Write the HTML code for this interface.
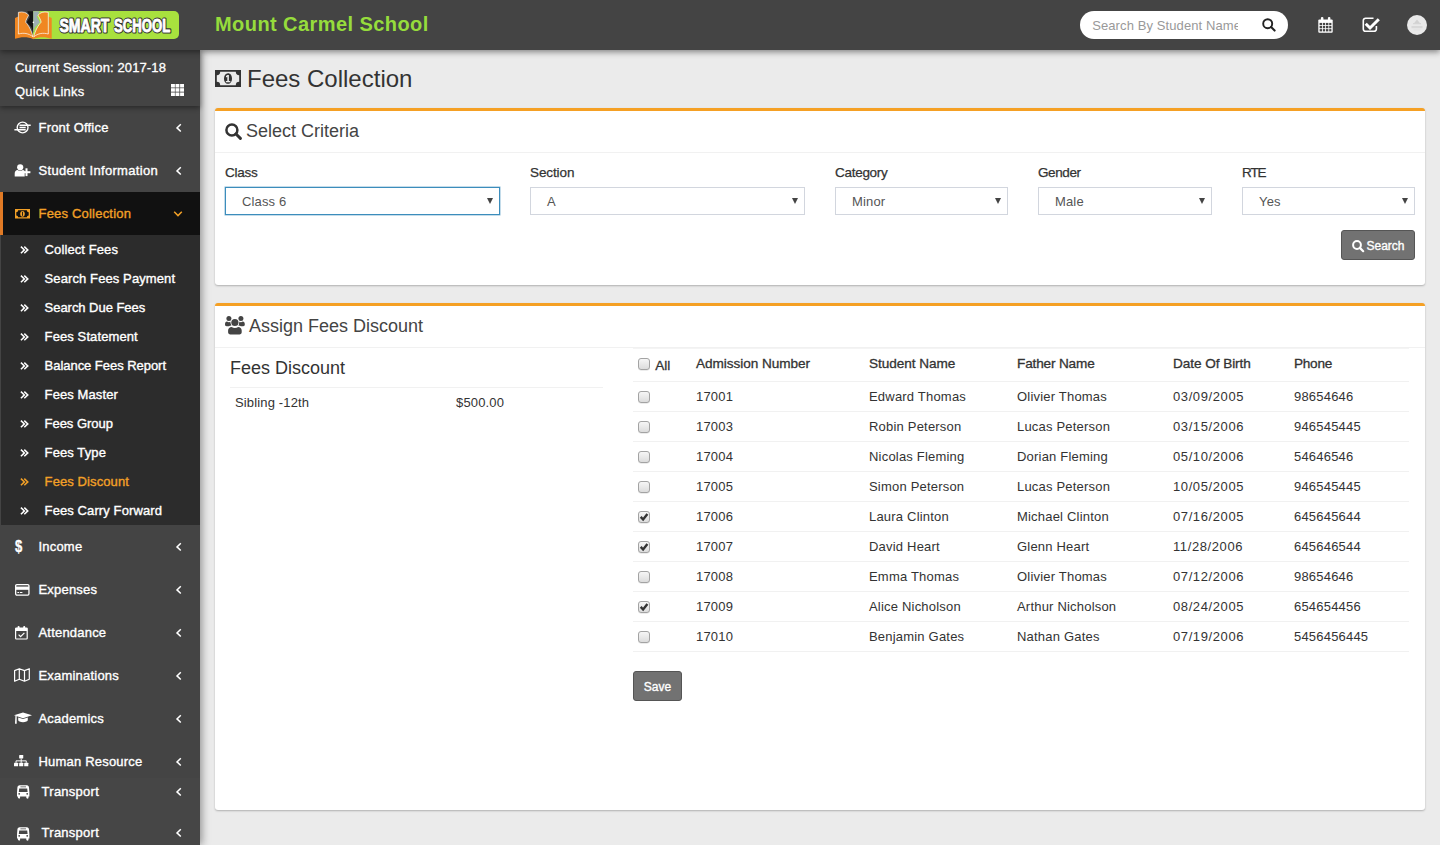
<!DOCTYPE html>
<html lang="en">
<head>
<meta charset="utf-8">
<title>Smart School - Fees Collection</title>
<style>
*{box-sizing:border-box;margin:0;padding:0}
html,body{width:1440px;height:845px;overflow:hidden}
body{font-family:"Liberation Sans",sans-serif;font-size:13px;color:#333;background:#ebebeb;position:relative}
svg{display:block}
a{color:inherit;text-decoration:none}
ul{list-style:none}

/* ---------- header ---------- */
.topbar{position:absolute;left:0;top:0;width:1440px;height:50px;background:#444;z-index:30;box-shadow:0 2px 6px rgba(0,0,0,.45)}
.logo{position:absolute;left:15px;top:11px;width:164px;height:29px}
.school{position:absolute;left:215px;top:11px;font-size:20px;line-height:26px;font-weight:bold;color:#96dc3c;letter-spacing:.43px;white-space:nowrap}
.search{position:absolute;left:1080px;top:11px;width:208px;height:28px;border-radius:14px;background:#fff}
.search span{position:absolute;left:12.2px;top:7px;width:146px;overflow:hidden;white-space:nowrap;font-size:13px;line-height:16px;color:#999;letter-spacing:.1px}
.search svg{position:absolute;left:182px;top:7px}
.tb-ico{position:absolute;top:17px}
.avatar{position:absolute;left:1407px;top:14.6px;width:20.3px;height:20.3px;border-radius:50%;background:#e9e9e9;overflow:hidden}

/* ---------- sidebar ---------- */
.sidebar{position:absolute;left:0;top:50px;width:200px;height:795px;background:#444;z-index:20;box-shadow:2px 0 8px rgba(0,0,0,.38)}
.session{position:absolute;left:0;top:0;width:200px;height:56px;background:#444;box-shadow:0 2px 5px rgba(0,0,0,.4);color:#fff;font-size:13px;z-index:2}
.session div{position:absolute;left:15px;white-space:nowrap;line-height:16px;-webkit-text-stroke:.3px currentColor;letter-spacing:.12px}
.session svg{position:absolute;left:171px;top:34px}
.menu{position:absolute;left:0;top:56px;width:200px}
.menu>li{position:relative;height:43px;color:#fff}
.menu>li>a{display:block;height:43px;line-height:43px;padding-left:38.5px;font-size:13px;font-weight:normal;-webkit-text-stroke:.36px currentColor;letter-spacing:.2px;white-space:nowrap;position:relative}
.menu>li .mi{position:absolute}
.menu>li .ar{position:absolute;left:174.5px;top:16.8px}
.menu>li.active{background:#111;color:#f2a027;border-left:3px solid #e07a25}
.menu>li.active>a{padding-left:35.5px}
.menu>li.active .ar{left:170px;top:17.8px}
.sub{background:#2c2c2c;height:290px;margin-left:1px}
.sub li{height:29px;line-height:29px;font-size:13px;font-weight:normal;-webkit-text-stroke:.36px currentColor;letter-spacing:.1px;color:#fff;padding-left:43.6px;position:relative;white-space:nowrap}
.sub li svg{position:absolute;left:19.4px;top:10.9px}
.sub li.on{color:#f2a027}

/* ---------- content ---------- */
.content{position:absolute;left:200px;top:50px;width:1240px;height:795px}
h1.page{position:absolute;left:47px;top:14px;font-size:24px;line-height:30px;font-weight:normal;color:#333;white-space:nowrap}
.h1ico{position:absolute;left:15px;top:20px}
.box{position:absolute;left:15px;width:1210px;background:#fff;border-top:3px solid #f5a024;border-radius:3px;box-shadow:0 1px 2px rgba(0,0,0,.25)}
.box-h{height:42px;border-bottom:1px solid #f1f1f1;position:relative}
.box-h h3{position:absolute;left:31px;top:8px;font-size:18px;line-height:24px;font-weight:normal;color:#444;white-space:nowrap}
.box-h svg{position:absolute;left:10px;top:12px}
label{position:absolute;font-size:13.5px;font-weight:normal;-webkit-text-stroke:.25px currentColor;letter-spacing:-.28px;color:#333;line-height:16px}
.sel{position:absolute;top:76px;height:28px;border:1px solid #d2d6de;background:#fff;font-size:13px;color:#555;line-height:27px;padding-left:16px;letter-spacing:.15px}
.sel:after{content:"";position:absolute;right:6.5px;top:9.8px;border-left:3.5px solid transparent;border-right:3.5px solid transparent;border-top:6px solid #444}
.sel.focus{border-color:#3c8dbc;box-shadow:0 0 0 .5px rgba(60,141,188,.6)}
.btn{position:absolute;background:#727272;border:1px solid #555;border-radius:3px;color:#fff;font-size:12px;font-weight:normal;-webkit-text-stroke:.35px currentColor;text-align:center;white-space:nowrap}
table{border-collapse:separate;border-spacing:0}

.fd{position:absolute;left:15px;top:51px;font-size:18px;line-height:22px;font-weight:normal;color:#333;white-space:nowrap}
.fdline{position:absolute;left:15px;top:81px;width:373px;height:1px;background:#f1f1f1}
.fdrow{position:absolute;left:0;top:89px;letter-spacing:.15px;font-size:13px;line-height:16px}
.fdrow span{position:absolute;white-space:nowrap;top:0}
.stu{position:absolute;left:418px;top:42px;width:776px;table-layout:fixed;font-size:13px}
.stu th{height:34px;padding:0 0 2.4px 0 !important;text-align:left;font-weight:normal;-webkit-text-stroke:.3px currentColor;letter-spacing:-.06px;font-size:13.6px;color:#333;border-bottom:1px solid #f1f1f1;border-top:1px solid #f4f4f4;white-space:nowrap;position:relative}
.stu td{height:30px;border-bottom:1px solid #f1f1f1;padding:0;white-space:nowrap;color:#333;letter-spacing:.2px}
.stu td:nth-child(5){letter-spacing:.6px}
.stu th:nth-child(4){letter-spacing:-.16px}
.stu th:nth-child(6){letter-spacing:-.26px}
.stu th:nth-child(1){width:63px}
.stu th:nth-child(2){width:173px}
.stu th:nth-child(3){width:148px}
.stu th:nth-child(4){width:156px}
.stu th:nth-child(5){width:121px}
.cb{display:inline-block;width:12px;height:12px;border:1px solid #a3a3a3;border-radius:3px;background:linear-gradient(#f6f6f6,#dcdcdc);margin-left:5px;vertical-align:middle;position:relative;top:-1px;box-shadow:0 .5px .5px rgba(0,0,0,.15)}
.cb svg{position:absolute;left:0;top:0}
.all{position:absolute;left:22.2px;top:9.4px;font-size:13.6px;line-height:16px;letter-spacing:0}
th .cb{position:absolute;left:0;top:9px !important}

.tr-wrap{position:absolute;left:0;top:728px;width:200px;height:67px;background:#464646}
.tr{position:absolute;left:0;margin-top:1px;width:200px;height:41px;color:#fff;font-size:13px;-webkit-text-stroke:.36px currentColor;letter-spacing:.2px}
.tr span{position:absolute;left:41.6px;letter-spacing:.25px;top:5px;line-height:16px;white-space:nowrap}
.tr .ar{position:absolute;left:174.5px;top:8.2px}
.tr .mi{position:absolute}
</style>
</head>
<body>

<div class="topbar">
  <div class="logo">
    <svg width="164" height="29" viewBox="0 0 164 29">
      <path d="M18 0 H159 A5 5 0 0 1 164 5 V23 A5 5 0 0 1 159 28 H18 Z" fill="#a8e13e"/>
      <path d="M12.3 0.3 H18.3 V21.5 L16.6 16.5 L11.8 11.2 L14.8 6 Z" fill="#151515"/>
      <path d="M18.3 0.3 H24.6 L22 6 L24.9 11.2 L20 16.5 L18.3 21.5 Z" fill="#9fb0b3"/>
      <path d="M0 7 L3.3 5.4 V20 L18.3 24 V28.2 C13 25.6 6 25.6 0 27.8 Z" fill="#f08722"/>
      <path d="M36.7 7 L33.4 5.4 V20 L18.3 24 V28.2 C23.7 25.6 30.7 25.6 36.7 27.8 Z" fill="#f08722"/>
      <path d="M3.4 1.3 C8 0.3 12 1.6 13.6 4.2 C12.2 7 10.8 9 10.6 11.2 C13.2 14 16.4 19 17.9 25.8 C13.6 22.2 8.6 21.6 3.4 23 Z" fill="#f08722" stroke="#fff" stroke-width=".7"/>
      <path d="M33.3 1.3 C28.7 0.3 24.7 1.6 23.1 4.2 C24.5 7 25.9 9 26.1 11.2 C23.5 14 20.3 19 18.8 25.8 C23.1 22.2 28.1 21.6 33.3 23 Z" fill="#f08722" stroke="#fff" stroke-width=".7"/>
      <circle cx="18.4" cy="11.4" r=".8" fill="#fff"/>
      <g font-family="Liberation Sans, sans-serif" font-weight="bold" font-size="18.4" stroke-linejoin="round">
        <text x="44.7" y="21.4" fill="#333" stroke="#333" stroke-width="3.2" textLength="50" lengthAdjust="spacingAndGlyphs">SMART</text>
        <text x="99.2" y="21.4" fill="#333" stroke="#333" stroke-width="3.2" textLength="56.3" lengthAdjust="spacingAndGlyphs">SCHOOL</text>
        <text x="44.4" y="21" fill="#fff" stroke="#fff" stroke-width=".9" textLength="50" lengthAdjust="spacingAndGlyphs">SMART</text>
        <text x="98.9" y="21" fill="#fff" stroke="#fff" stroke-width=".9" textLength="56.3" lengthAdjust="spacingAndGlyphs">SCHOOL</text>
      </g>
    </svg>
  </div>
  <div class="school">Mount Carmel School</div>
  <div class="search"><span>Search By Student Name</span>
    <svg width="14" height="14" viewBox="0 0 14 14"><circle cx="5.7" cy="5.7" r="4.5" fill="none" stroke="#222" stroke-width="1.9"/><path d="M9.1 9.1 L12.6 12.6" stroke="#222" stroke-width="2.1" stroke-linecap="round"/></svg>
  </div>
  <svg class="tb-ico" style="left:1318px" width="15" height="16" viewBox="0 0 15 16"><rect x="0.3" y="2.6" width="14.4" height="13.2" rx="1" fill="#fff"/><rect x="2.9" y="0" width="2.5" height="4.6" rx="1.1" fill="#fff"/><rect x="9.9" y="0" width="2.5" height="4.6" rx="1.1" fill="#fff"/><g fill="#444"><rect x="1.6" y="5.9" width="2.4" height="2.3"/><rect x="4.8" y="5.9" width="2.4" height="2.3"/><rect x="8" y="5.9" width="2.4" height="2.3"/><rect x="11.2" y="5.9" width="2.2" height="2.3"/><rect x="1.6" y="9" width="2.4" height="2.3"/><rect x="4.8" y="9" width="2.4" height="2.3"/><rect x="8" y="9" width="2.4" height="2.3"/><rect x="11.2" y="9" width="2.2" height="2.3"/><rect x="1.6" y="12.1" width="2.4" height="2.3"/><rect x="4.8" y="12.1" width="2.4" height="2.3"/><rect x="8" y="12.1" width="2.4" height="2.3"/><rect x="11.2" y="12.1" width="2.2" height="2.3"/></g></svg>
  <svg class="tb-ico" style="left:1362px;top:16px" width="18" height="17" viewBox="0 0 18 17"><path d="M11.5 2.2 H3.6 A2.3 2.3 0 0 0 1.3 4.5 V13 A2.3 2.3 0 0 0 3.6 15.3 H12.1 A2.3 2.3 0 0 0 14.4 13 V10" fill="none" stroke="#fff" stroke-width="1.6"/><path d="M3.7 7.7 L8 12 L16.8 3.2" fill="none" stroke="#fff" stroke-width="3"/></svg>
  <div class="avatar"><svg width="20" height="20" viewBox="0 0 20 20" fill="#d2d2d2"><path d="M7 8.2 L10 4.6 L13 8.2 Z"/><rect x="6" y="8.2" width="8" height="1"/><rect x="4.5" y="11" width="11" height="2.2" fill="#d8d8d8"/><rect x="6.5" y="14.6" width="7" height=".7" fill="#dcdcdc"/></svg></div>
</div>

<div class="sidebar">
  <div class="session">
    <div style="top:10px">Current Session: 2017-18</div>
    <div style="top:34px;letter-spacing:.2px">Quick Links</div>
    <svg width="13" height="12" viewBox="0 0 13 12" fill="#fff"><rect x="0.0" y="0.0" width="3.9" height="3.5"/><rect x="4.5" y="0.0" width="3.9" height="3.5"/><rect x="9.1" y="0.0" width="3.9" height="3.5"/><rect x="0.0" y="4.2" width="3.9" height="3.5"/><rect x="4.5" y="4.2" width="3.9" height="3.5"/><rect x="9.1" y="4.2" width="3.9" height="3.5"/><rect x="0.0" y="8.5" width="3.9" height="3.5"/><rect x="4.5" y="8.5" width="3.9" height="3.5"/><rect x="9.1" y="8.5" width="3.9" height="3.5"/></svg>
  </div>
  <ul class="menu" id="menu">
    <li><a><svg class="mi" style="left:14px;top:14.5px" width="17" height="13" viewBox="0 0 17 13"><circle cx="8.6" cy="6.5" r="5.4" fill="none" stroke="#fff" stroke-width="1.4"/><path d="M5.5 4.3H16.7M5.5 6.5H11.7M0.4 8.7H11.7" stroke="#fff" stroke-width="1.4"/></svg>Front Office<svg class="ar" width="8" height="10" viewBox="0 0 8 10"><path d="M5.8 1.3 L2 4.9 L5.8 8.5" fill="none" stroke="#fff" stroke-width="1.5"/></svg></a></li>
    <li><a style="letter-spacing:.32px"><svg class="mi" style="left:14.4px;top:14.9px" width="17" height="13" viewBox="0 0 17 13" fill="#fff"><circle cx="6.2" cy="3.3" r="3.1"/><path d="M.7 12.4 V9.6 C.7 7.2 2 6 3.6 5.900 C4.400 6.700 5.300 7 6.200 7 C7.100 7 8 6.700 8.800 5.900 C9.700 6 10.300 6.400 10.700 7 V12.400 Z"/><rect x="8.6" y="7.2" width="7.8" height="2"/><rect x="11.5" y="4.3" width="2" height="7.8"/></svg>Student Information<svg class="ar" width="8" height="10" viewBox="0 0 8 10"><path d="M5.8 1.3 L2 4.9 L5.8 8.5" fill="none" stroke="#fff" stroke-width="1.5"/></svg></a></li>
    <li class="active"><a><svg class="mi" style="left:12px;top:16.6px" width="15" height="10" viewBox="0 0 15 10"><path fill-rule="evenodd" fill="#f2a027" d="M0 0H15V9.6H0Z M3.2 1.3 A2 2 0 0 1 1.3 3.2 V6.4 A2 2 0 0 1 3.2 8.3 H11.8 A2 2 0 0 1 13.7 6.4 V3.2 A2 2 0 0 1 11.8 1.3 Z"/><ellipse cx="7.5" cy="4.8" rx="2.3" ry="2.9" fill="#f2a027"/><rect x="7.1" y="2.8" width="0.9" height="4" fill="#111"/></svg>Fees Collection<svg class="ar" width="10" height="8" viewBox="0 0 10 8"><path d="M1.2 1.8 L5 5.6 L8.8 1.8" fill="none" stroke="#f2a027" stroke-width="1.5"/></svg></a></li>
    <li style="height:290px;padding:0"><ul class="sub">
      <li><svg width="9" height="8" viewBox="0 0 9 8"><path d="M0.9 0.6 L4.4 3.9 L0.9 7.2 M4.3 0.6 L7.8 3.9 L4.3 7.2" fill="none" stroke="currentColor" stroke-width="1.5"/></svg>Collect Fees</li>
      <li><svg width="9" height="8" viewBox="0 0 9 8"><path d="M0.9 0.6 L4.4 3.9 L0.9 7.2 M4.3 0.6 L7.8 3.9 L4.3 7.2" fill="none" stroke="currentColor" stroke-width="1.5"/></svg>Search Fees Payment</li>
      <li><svg width="9" height="8" viewBox="0 0 9 8"><path d="M0.9 0.6 L4.4 3.9 L0.9 7.2 M4.3 0.6 L7.8 3.9 L4.3 7.2" fill="none" stroke="currentColor" stroke-width="1.5"/></svg><span style="letter-spacing:-.04px">Search Due Fees</span></li>
      <li><svg width="9" height="8" viewBox="0 0 9 8"><path d="M0.9 0.6 L4.4 3.9 L0.9 7.2 M4.3 0.6 L7.8 3.9 L4.3 7.2" fill="none" stroke="currentColor" stroke-width="1.5"/></svg>Fees Statement</li>
      <li><svg width="9" height="8" viewBox="0 0 9 8"><path d="M0.9 0.6 L4.4 3.9 L0.9 7.2 M4.3 0.6 L7.8 3.9 L4.3 7.2" fill="none" stroke="currentColor" stroke-width="1.5"/></svg><span style="letter-spacing:-.04px">Balance Fees Report</span></li>
      <li><svg width="9" height="8" viewBox="0 0 9 8"><path d="M0.9 0.6 L4.4 3.9 L0.9 7.2 M4.3 0.6 L7.8 3.9 L4.3 7.2" fill="none" stroke="currentColor" stroke-width="1.5"/></svg>Fees Master</li>
      <li><svg width="9" height="8" viewBox="0 0 9 8"><path d="M0.9 0.6 L4.4 3.9 L0.9 7.2 M4.3 0.6 L7.8 3.9 L4.3 7.2" fill="none" stroke="currentColor" stroke-width="1.5"/></svg><span style="letter-spacing:-.04px">Fees Group</span></li>
      <li><svg width="9" height="8" viewBox="0 0 9 8"><path d="M0.9 0.6 L4.4 3.9 L0.9 7.2 M4.3 0.6 L7.8 3.9 L4.3 7.2" fill="none" stroke="currentColor" stroke-width="1.5"/></svg>Fees Type</li>
      <li class="on"><svg width="9" height="8" viewBox="0 0 9 8"><path d="M0.9 0.6 L4.4 3.9 L0.9 7.2 M4.3 0.6 L7.8 3.9 L4.3 7.2" fill="none" stroke="currentColor" stroke-width="1.5"/></svg>Fees Discount</li>
      <li><svg width="9" height="8" viewBox="0 0 9 8"><path d="M0.9 0.6 L4.4 3.9 L0.9 7.2 M4.3 0.6 L7.8 3.9 L4.3 7.2" fill="none" stroke="currentColor" stroke-width="1.5"/></svg>Fees Carry Forward</li>
    </ul></li>
    <li><a><span class="mi" style="left:15.2px;top:7px;font-size:14.5px;font-weight:bold;line-height:28px;transform:scale(.9,1.14);transform-origin:0 50%;-webkit-text-stroke:.3px #fff">$</span>Income<svg class="ar" width="8" height="10" viewBox="0 0 8 10"><path d="M5.8 1.3 L2 4.9 L5.8 8.5" fill="none" stroke="#fff" stroke-width="1.5"/></svg></a></li>
    <li><a><svg class="mi" style="left:14.7px;top:15.5px" width="15" height="12" viewBox="0 0 15 12"><rect x="0.65" y="0.65" width="13.3" height="10.4" rx="1.2" fill="none" stroke="#fff" stroke-width="1.3"/><rect x="0.6" y="2.6" width="13.4" height="3.2" fill="#fff"/><rect x="2.4" y="8" width="1.6" height="1" fill="#fff"/><rect x="4.8" y="8" width="2.6" height="1" fill="#fff"/></svg>Expenses<svg class="ar" width="8" height="10" viewBox="0 0 8 10"><path d="M5.8 1.3 L2 4.9 L5.8 8.5" fill="none" stroke="#fff" stroke-width="1.5"/></svg></a></li>
    <li><a><svg class="mi" style="left:14.7px;top:14.6px" width="13" height="14" viewBox="0 0 13 14"><rect x="0.6" y="2" width="11.6" height="11" rx="0.8" fill="none" stroke="#fff" stroke-width="1.2"/><rect x="0.6" y="2" width="11.6" height="3" fill="#fff"/><rect x="2.6" y="0" width="2" height="3.4" rx="0.9" fill="#fff"/><rect x="8.2" y="0" width="2" height="3.4" rx="0.9" fill="#fff"/><path d="M3.6 8.6 L5.6 10.6 L9.4 6.8" fill="none" stroke="#fff" stroke-width="1.2"/></svg>Attendance<svg class="ar" width="8" height="10" viewBox="0 0 8 10"><path d="M5.8 1.3 L2 4.9 L5.8 8.5" fill="none" stroke="#fff" stroke-width="1.5"/></svg></a></li>
    <li><a><svg class="mi" style="left:14.4px;top:14.2px" width="16" height="14" viewBox="0 0 16 14"><path d="M0.6 2.6 L5.3 0.7 L10.5 2.6 L15.3 0.7 V11.2 L10.5 13.2 L5.3 11.2 L0.6 13.2 Z M5.3 0.7 V11.2 M10.5 2.6 V13.2" fill="none" stroke="#fff" stroke-width="1.2" stroke-linejoin="round"/></svg>Examinations<svg class="ar" width="8" height="10" viewBox="0 0 8 10"><path d="M5.8 1.3 L2 4.9 L5.8 8.5" fill="none" stroke="#fff" stroke-width="1.5"/></svg></a></li>
    <li><a><svg class="mi" style="left:14.2px;top:15px" width="18" height="12" viewBox="0 0 18 12" fill="#fff"><path d="M9 .4 L18 3.300 L9 6.200 L0 3.300 Z"/><path d="M4.200 5.500 L9 7.100 L13.800 5.500 V8.100 C13.800 9.500 11.600 10.200 9 10.200 C6.400 10.200 4.200 9.500 4.200 8.100 Z"/><path d="M1.400 3.900 H2.700 V11.800 H1 Z"/></svg>Academics<svg class="ar" width="8" height="10" viewBox="0 0 8 10"><path d="M5.8 1.3 L2 4.9 L5.8 8.5" fill="none" stroke="#fff" stroke-width="1.5"/></svg></a></li>
    <li><a><svg class="mi" style="left:14.4px;top:15px" width="14.6" height="11.7" viewBox="0 0 15 12" fill="#fff"><rect x="5.3" y="0" width="4.2" height="3.6" rx="0.4"/><rect x="0" y="8" width="4.2" height="3.6" rx="0.4"/><rect x="5.3" y="8" width="4.2" height="3.6" rx="0.4"/><rect x="10.5" y="8" width="4.2" height="3.6" rx="0.4"/><path d="M7.4 3.6 V8 M2.1 8 V6 H12.6 V8" fill="none" stroke="#fff" stroke-width="1"/></svg>Human Resource<svg class="ar" width="8" height="10" viewBox="0 0 8 10"><path d="M5.8 1.3 L2 4.9 L5.8 8.5" fill="none" stroke="#fff" stroke-width="1.5"/></svg></a></li>
  </ul>
  <div class="tr-wrap">
    <div class="tr" style="top:0"><svg class="mi" style="left:17.3px;top:6.2px" width="13" height="14" viewBox="0 0 13 14"><path fill="#fff" fill-rule="evenodd" d="M2.6 0.3 H9.9 C11.2 0.3 11.8 1.2 12 2.6 L12.4 7.5 V11.4 H11.5 V12.6 C11.5 13.4 11 13.8 10.4 13.8 C9.8 13.8 9.3 13.4 9.3 12.6 V11.4 H3.1 V12.6 C3.1 13.4 2.6 13.8 2 13.8 C1.4 13.8 0.9 13.4 0.9 12.6 V11.4 H0 V7.5 L0.4 2.6 C0.6 1.2 1.2 0.3 2.6 0.3 Z M3.4 1.4 V2.2 H9 V1.4 Z M2.2 3.4 L1.8 7 H10.6 L10.2 3.4 Z M1.3 8.8 A0.9 0.9 0 1 0 3.1 8.8 A0.9 0.9 0 1 0 1.3 8.8 Z M9.3 8.8 A0.9 0.9 0 1 0 11.1 8.8 A0.9 0.9 0 1 0 9.3 8.8 Z"/></svg><span>Transport</span><svg class="ar" width="8" height="10" viewBox="0 0 8 10"><path d="M5.8 1.3 L2 4.9 L5.8 8.5" fill="none" stroke="#fff" stroke-width="1.5"/></svg></div>
    <div class="tr" style="top:41px"><svg class="mi" style="left:17.3px;top:6.5px" width="13" height="14" viewBox="0 0 13 14"><path fill="#fff" fill-rule="evenodd" d="M2.6 0.3 H9.9 C11.2 0.3 11.8 1.2 12 2.6 L12.4 7.5 V11.4 H11.5 V12.6 C11.5 13.4 11 13.8 10.4 13.8 C9.8 13.8 9.3 13.4 9.3 12.6 V11.4 H3.1 V12.6 C3.1 13.4 2.6 13.8 2 13.8 C1.4 13.8 0.9 13.4 0.9 12.6 V11.4 H0 V7.5 L0.4 2.6 C0.6 1.2 1.2 0.3 2.6 0.3 Z M3.4 1.4 V2.2 H9 V1.4 Z M2.2 3.4 L1.8 7 H10.6 L10.2 3.4 Z M1.3 8.8 A0.9 0.9 0 1 0 3.1 8.8 A0.9 0.9 0 1 0 1.3 8.8 Z M9.3 8.8 A0.9 0.9 0 1 0 11.1 8.8 A0.9 0.9 0 1 0 9.3 8.8 Z"/></svg><span>Transport</span><svg class="ar" width="8" height="10" viewBox="0 0 8 10"><path d="M5.8 1.3 L2 4.9 L5.8 8.5" fill="none" stroke="#fff" stroke-width="1.5"/></svg></div>
  </div>
</div>

<div class="content">
  <svg class="h1ico" width="26" height="17" viewBox="0 0 26 17"><path fill-rule="evenodd" fill="#333" d="M0 0H26V17H0Z M5.2 1.8 A3.4 3.4 0 0 1 1.8 5.2 V11.8 A3.4 3.4 0 0 1 5.2 15.2 H20.8 A3.4 3.4 0 0 1 24.2 11.8 V5.2 A3.4 3.4 0 0 1 20.8 1.8 Z M13 3.2 C10.6 3.2 9 5.4 9 8.5 C9 11.6 10.6 13.8 13 13.8 C15.4 13.8 17 11.6 17 8.5 C17 5.4 15.400 3.2 13 3.2 Z"/><path fill="#ebebeb" d="M12.400 5 H13.900 V11 H15.300 V12.200 H10.900 V11 H12.300 V6.800 L11 7.400 V6 Z"/></svg>
  <h1 class="page">Fees Collection</h1>

  <div class="box" style="top:58px;height:177px">
    <div class="box-h"><svg width="17" height="17" viewBox="0 0 17 17"><circle cx="6.9" cy="6.9" r="5.5" fill="none" stroke="#333" stroke-width="2.5"/><path d="M11 11 L15.4 15.4" stroke="#333" stroke-width="2.9" stroke-linecap="round"/></svg><h3>Select Criteria</h3></div>
    <label style="left:10px;top:53.5px">Class</label>
    <label style="left:315px;top:53.5px;letter-spacing:-.1px">Section</label>
    <label style="left:620px;top:53.5px">Category</label>
    <label style="left:823px;top:53.5px;letter-spacing:-.4px">Gender</label>
    <label style="left:1027px;top:53.5px;letter-spacing:-1.1px">RTE</label>
    <div class="sel focus" style="left:10px;width:275px">Class 6</div>
    <div class="sel" style="left:315px;width:275px">A</div>
    <div class="sel" style="left:620px;width:173px">Minor</div>
    <div class="sel" style="left:823px;width:174px">Male</div>
    <div class="sel" style="left:1027px;width:173px">Yes</div>
    <div class="btn" style="left:1126px;top:119px;width:74px;height:30px;line-height:30px;text-align:left;padding-left:24.5px"><svg style="position:absolute;left:10px;top:8.6px" width="13" height="13" viewBox="0 0 13 13"><circle cx="5" cy="5" r="3.9" fill="none" stroke="#fff" stroke-width="2"/><path d="M7.9 7.9 L11.2 11.2" stroke="#fff" stroke-width="2.2" stroke-linecap="round"/></svg>Search</div>
  </div>

  <div class="box" style="top:253px;height:507px">
    <div class="box-h"><svg style="left:9.9px;top:10.3px" width="20" height="19" viewBox="0 0 20 19" fill="#444"><circle cx="3.9" cy="2.6" r="2.5"/><circle cx="15.9" cy="2.6" r="2.5"/><path d="M0 8.6 C0 6.4 .8 5.6 2 5.6 C2.600 6 3.200 6.200 3.900 6.200 C4.600 6.200 5.200 6 5.700 5.700 C5.700 7.600 6 8.800 6.600 9.600 C5.400 9.700 4.400 10 3.800 10.300 H1.600 C.6 10.300 0 9.700 0 8.600 Z"/><path d="M19.800 8.600 C19.800 6.400 19 5.600 17.800 5.600 C17.200 6 16.600 6.200 15.900 6.200 C15.200 6.200 14.600 6 14.100 5.700 C14.100 7.600 13.800 8.800 13.200 9.600 C14.400 9.700 15.400 10 16 10.300 H18.200 C19.200 10.300 19.800 9.700 19.800 8.600 Z"/><circle cx="9.9" cy="6.500" r="4.300" fill="#fff"/><circle cx="9.9" cy="6.500" r="3.600"/><path d="M3.100 16.200 V14.600 C3.100 12.200 4.800 10.900 6.600 10.900 C7.500 11.600 8.700 11.900 9.900 11.900 C11.100 11.900 12.300 11.600 13.200 10.900 C15 10.900 16.700 12.200 16.700 14.600 V16.200 C16.700 17.600 15.700 18.400 14.500 18.400 H5.300 C4.100 18.400 3.100 17.600 3.100 16.200 Z"/></svg><h3 style="left:34px">Assign Fees Discount</h3></div>
    <h4 class="fd">Fees Discount</h4>
    <div class="fdline"></div>
    <div class="fdrow"><span style="left:20px">Sibling -12th</span><span style="left:241px">$500.00</span></div>
    <table class="stu">
      <thead><tr><th><span class="cb"></span><span class="all">All</span></th><th>Admission Number</th><th>Student Name</th><th>Father Name</th><th>Date Of Birth</th><th>Phone</th></tr></thead>
      <tbody>
      <tr><td><span class="cb"></span></td><td>17001</td><td>Edward Thomas</td><td>Olivier Thomas</td><td>03/09/2005</td><td>98654646</td></tr>
      <tr><td><span class="cb"></span></td><td>17003</td><td>Robin Peterson</td><td>Lucas Peterson</td><td>03/15/2006</td><td>946545445</td></tr>
      <tr><td><span class="cb"></span></td><td>17004</td><td>Nicolas Fleming</td><td>Dorian Fleming</td><td>05/10/2006</td><td>54646546</td></tr>
      <tr><td><span class="cb"></span></td><td>17005</td><td>Simon Peterson</td><td>Lucas Peterson</td><td>10/05/2005</td><td>946545445</td></tr>
      <tr><td><span class="cb on"><svg width="10" height="10" viewBox="0 0 10 10"><path d="M1.7 4.9 L4.1 7.5 L8.4 1.9" fill="none" stroke="#333" stroke-width="2.4"/></svg></span></td><td>17006</td><td>Laura Clinton</td><td>Michael Clinton</td><td>07/16/2005</td><td>645645644</td></tr>
      <tr><td><span class="cb on"><svg width="10" height="10" viewBox="0 0 10 10"><path d="M1.7 4.9 L4.1 7.5 L8.4 1.9" fill="none" stroke="#333" stroke-width="2.4"/></svg></span></td><td>17007</td><td>David Heart</td><td>Glenn Heart</td><td>11/28/2006</td><td>645646544</td></tr>
      <tr><td><span class="cb"></span></td><td>17008</td><td>Emma Thomas</td><td>Olivier Thomas</td><td>07/12/2006</td><td>98654646</td></tr>
      <tr><td><span class="cb on"><svg width="10" height="10" viewBox="0 0 10 10"><path d="M1.7 4.9 L4.1 7.5 L8.4 1.9" fill="none" stroke="#333" stroke-width="2.4"/></svg></span></td><td>17009</td><td>Alice Nicholson</td><td>Arthur Nicholson</td><td>08/24/2005</td><td>654654456</td></tr>
      <tr><td><span class="cb"></span></td><td>17010</td><td>Benjamin Gates</td><td>Nathan Gates</td><td>07/19/2006</td><td>5456456445</td></tr>
      </tbody>
    </table>
    <div class="btn" style="left:418px;top:365px;width:49px;height:30px;line-height:30px">Save</div>
  </div>
</div>

</body>
</html>
